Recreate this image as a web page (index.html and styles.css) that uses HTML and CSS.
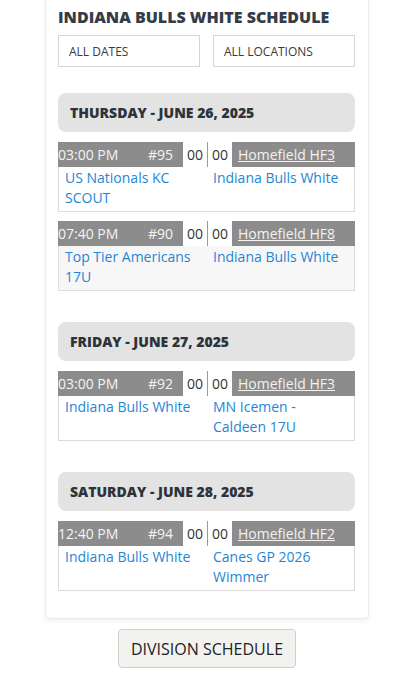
FILE: index.html
```html
<!DOCTYPE html>
<html>
<head>
<meta charset="utf-8">
<link rel="stylesheet" href="styles.css">
</head>
<body>
<div class="page">
  <div class="card">
    <h1 class="title">INDIANA BULLS WHITE SCHEDULE</h1>
    <div class="filters">
      <div class="select">ALL DATES</div>
      <div class="select">ALL LOCATIONS</div>
    </div>

    <section class="day">
      <h2 class="day-head">THURSDAY - JUNE 26, 2025</h2>
      <div class="game">
        <div class="bar">
          <span class="time">03:00 PM</span>
          <span class="num">#95</span>
          <span class="score">00</span><span class="score">00</span>
          <a class="loc">Homefield HF3</a>
        </div>
        <div class="teams">
          <a class="team">US Nationals KC SCOUT</a>
          <a class="team">Indiana Bulls White</a>
        </div>
      </div>
      <div class="game">
        <div class="bar">
          <span class="time">07:40 PM</span>
          <span class="num">#90</span>
          <span class="score">00</span><span class="score">00</span>
          <a class="loc">Homefield HF8</a>
        </div>
        <div class="teams alt">
          <a class="team">Top Tier Americans 17U</a>
          <a class="team">Indiana Bulls White</a>
        </div>
      </div>
    </section>

    <section class="day">
      <h2 class="day-head">FRIDAY - JUNE 27, 2025</h2>
      <div class="game">
        <div class="bar">
          <span class="time">03:00 PM</span>
          <span class="num">#92</span>
          <span class="score">00</span><span class="score">00</span>
          <a class="loc">Homefield HF3</a>
        </div>
        <div class="teams">
          <a class="team">Indiana Bulls White</a>
          <a class="team">MN Icemen - Caldeen 17U</a>
        </div>
      </div>
    </section>

    <section class="day">
      <h2 class="day-head">SATURDAY - JUNE 28, 2025</h2>
      <div class="game">
        <div class="bar">
          <span class="time">12:40 PM</span>
          <span class="num">#94</span>
          <span class="score">00</span><span class="score">00</span>
          <a class="loc">Homefield HF2</a>
        </div>
        <div class="teams">
          <a class="team">Indiana Bulls White</a>
          <a class="team">Canes GP 2026 Wimmer</a>
        </div>
      </div>
    </section>
  </div>
  <div class="actions">
    <button class="btn">DIVISION SCHEDULE</button>
  </div>
</div>
</body>
</html>
```
FILE: styles.css
```css
* { box-sizing: border-box; }
html, body { margin: 0; padding: 0; background: #fff; }
body { font-family: "Open Sans", "Noto Sans", sans-serif; color: #333; }

.page { width: 407px; }

.card {
  margin: -10px 0 0 45px;
  width: 324px;
  padding: 15px 13px 27px 12px;
  border: 1px solid #ececec;
  border-radius: 4px;
  box-shadow: 0 2px 4px rgba(0,0,0,0.06);
  background: #fff;
}

.title {
  margin: 0;
  font-size: 16px;
  font-weight: 800;
  line-height: 22px;
  color: #343d47;
}

.filters {
  display: flex;
  gap: 13px;
  margin-top: 7px;
}
.select {
  flex: 1;
  height: 32px;
  border: 1px solid #d6d6d6;
  padding: 0 10px;
  font-size: 12px;
  line-height: 31px;
  color: #3a3a3a;
}

.day { margin-top: 26px; }
.day + .day { margin-top: 31px; }

.day-head {
  margin: 0 0 10px;
  height: 39px;
  background: #e3e3e3;
  border-radius: 8px;
  padding: 0 12px;
  font-size: 14px;
  font-weight: 800;
  line-height: 39px;
  color: #2c333b;
}

.game + .game { margin-top: 9px; }

.bar {
  display: flex;
  align-items: stretch;
  height: 25px;
  background: #8c8c8c;
  color: #f4f4f4;
  font-size: 14px;
  line-height: 25px;
}
.bar > * { flex-shrink: 0; }
.time { width: 80px; white-space: nowrap; }
.num { width: 45px; text-align: right; padding-right: 10px; }
.score {
  width: 24px;
  background: #fff;
  color: #333;
  text-align: center;
}
.score + .score { width: 25px; border-left: 1px solid #9a9a9a; }
.loc {
  padding-left: 6px;
  color: #f2f2f2;
  text-decoration: underline;
  white-space: nowrap;
}

.teams {
  display: flex;
  border: 1px solid #dcdcdc;
  border-top: 0;
  padding: 1px 6px 3px;
  background: #fff;
  font-size: 14px;
  line-height: 20px;
}
.teams.alt { background: #f7f7f7; }
.team {
  color: #1e86d6;
  flex: 1;
  min-width: 0;
}
.team:first-child {
  flex: 0 0 148px;
  padding-right: 8px;
}

.actions {
  display: flex;
  justify-content: center;
  margin-top: 10px;
  padding-left: 7px;
}
.btn {
  width: 178px;
  height: 39px;
  background: #f3f2ef;
  border: 1px solid #cfcfcf;
  border-radius: 4px;
  font-family: "Open Sans", "Noto Sans", sans-serif;
  font-size: 16px;
  color: #222;
  padding: 0;
}
```
